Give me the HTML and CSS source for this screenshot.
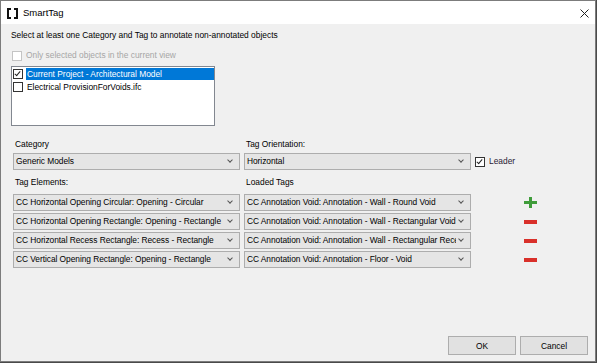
FILE: index.html
```html
<!DOCTYPE html>
<html lang="en">
<head>
  <meta charset="UTF-8" />
  <title>SmartTag</title>
  <link rel="stylesheet" href="styles.css">
</head>
<body>

<div class="window">
  <div class="titlebar">
    <svg class="app-icon" width="11" height="11" viewBox="0 0 11 11">
      <path d="M0 0h4v2H2v7h2v2H0z" fill="#111"/>
      <path d="M11 0H7v2h2v7H7v2h4z" fill="#111"/>
    </svg>
    <span class="title">SmartTag</span>
    <svg class="close" width="9" height="9" viewBox="0 0 9 9">
      <path d="M0.5 0.5L8.5 8.5M8.5 0.5L0.5 8.5" stroke="#222" stroke-width="1"/>
    </svg>
  </div>

  <div class="content">
    <p class="intro">Select at least one Category and Tag to annotate non-annotated objects</p>

    <label class="check disabled">
      <span class="box"></span>
      Only selected objects in the current view
    </label>

    <div class="listbox">
      <div class="list-item selected">
        <span class="box checked"></span>
        <span class="item-text">Current Project - Architectural Model</span>
      </div>
      <div class="list-item">
        <span class="box"></span>
        <span class="item-text">Electrical ProvisionForVoids.ifc</span>
      </div>
    </div>

    <div class="form">
      <div class="label first">Category</div>
      <div class="label first">Tag Orientation:</div>
      <div></div>
      <div></div>

      <div class="combo"><span>Generic Models</span></div>
      <div class="combo"><span>Horizontal</span></div>
      <label class="check leader"><span class="box checked"></span>Leader</label>
      <div></div>

      <div class="label">Tag Elements:</div>
      <div class="label">Loaded Tags</div>
      <div></div>
      <div></div>

      <div class="combo"><span>CC Horizontal Opening Circular: Opening - Circular</span></div>
      <div class="combo"><span>CC Annotation Void: Annotation - Wall - Round Void</span></div>
      <div></div>
      <div class="icon plus"></div>

      <div class="combo"><span>CC Horizontal Opening Rectangle: Opening - Rectangle</span></div>
      <div class="combo"><span>CC Annotation Void: Annotation - Wall - Rectangular Void</span></div>
      <div></div>
      <div class="icon minus"></div>

      <div class="combo"><span>CC Horizontal Recess Rectangle: Recess - Rectangle</span></div>
      <div class="combo"><span>CC Annotation Void: Annotation - Wall - Rectangular Recess</span></div>
      <div></div>
      <div class="icon minus"></div>

      <div class="combo"><span>CC Vertical Opening Rectangle: Opening - Rectangle</span></div>
      <div class="combo"><span>CC Annotation Void: Annotation - Floor - Void</span></div>
      <div></div>
      <div class="icon minus"></div>
    </div>

    <div class="buttons">
      <button>OK</button>
      <button>Cancel</button>
    </div>
  </div>
</div>

</body>
</html>
```

FILE: styles.css
```css
body {
  margin: 0;
  background: #4a4a4a;
  font-family: "Liberation Sans", Arial, sans-serif;
  font-size: 8.4px;
  line-height: 11px;
  color: #000;
}

.window {
  width: 594px;
  height: 360px;
  border: 1px solid #7c7c7c;
  background: #f0f0f0;
  display: flex;
  flex-direction: column;
}

.titlebar {
  height: 23px;
  background: #fff;
  display: flex;
  align-items: center;
  padding-left: 6px;
  padding-right: 6px;
}

.app-icon {
  margin-right: 5px;
  margin-top: 1px;
}

.title {
  font-size: 9.5px;
  flex: 1;
}

.close {
  margin-top: 1px;
}

.content {
  flex: 1;
  display: flex;
  flex-direction: column;
  padding: 6px 0 0 10px;
}

.intro {
  margin: 0;
}

/* checkboxes */
.check {
  display: flex;
  align-items: center;
  gap: 4px;
}

.box {
  width: 8px;
  height: 8px;
  border: 1px solid #333;
  background: #fff;
  position: relative;
  flex-shrink: 0;
}

.box.checked::after {
  content: "";
  position: absolute;
  left: 2px;
  top: 0px;
  width: 2px;
  height: 5px;
  border: solid #222;
  border-width: 0 1px 1px 0;
  transform: rotate(40deg);
}

.check.disabled {
  color: #a6a6a6;
  margin-top: 9px;
  margin-left: 1px;
}

.check.disabled .box {
  border-color: #c4c4c4;
}

/* list of models */
.listbox {
  width: 202px;
  height: 58px;
  margin-top: 5px;
  border: 1px solid #828790;
  background: #fff;
}

.list-item {
  display: flex;
  align-items: center;
  height: 12px;
  padding-left: 1px;
  margin-top: 1px;
}

.list-item .box {
  margin-right: 3px;
}

.item-text {
  flex: 1;
  padding-left: 1px;
  height: 12px;
  line-height: 12px;
}

.list-item.selected .item-text {
  background: #0078d7;
  color: #fff;
}

/* category / tag form */
.form {
  display: grid;
  grid-template-columns: 227px 227px 45px 13px;
  grid-template-rows: 12px 17px 20px 17px 17px 17px 17px;
  column-gap: 4px;
  row-gap: 2px;
  margin-top: 13px;
  margin-left: 2px;
}

.label {
  padding-left: 2px;
}

.form .label:not(.first) {
  padding-top: 5px;
}

.combo {
  border: 1px solid #adadad;
  background: #e5e5e5;
  display: flex;
  align-items: center;
  padding-left: 2px;
  overflow: hidden;
  position: relative;
}

.combo span {
  white-space: nowrap;
  overflow: hidden;
  flex: 1;
  margin-right: 14px;
  line-height: 13px;
  letter-spacing: -0.05px;
}

.combo::after {
  content: "";
  position: absolute;
  right: 7px;
  top: 4px;
  width: 3px;
  height: 3px;
  border: solid #555;
  border-width: 0 1px 1px 0;
  transform: rotate(45deg);
}

.check.leader {
  gap: 4px;
  color: #2a1a35;
}

/* add / remove icons */
.icon {
  align-self: center;
  position: relative;
  height: 11px;
}

.icon.minus::before {
  content: "";
  position: absolute;
  left: 0;
  top: 4px;
  width: 13px;
  height: 4px;
  background: #d9302a;
}

.icon.plus::before,
.icon.plus::after {
  content: "";
  position: absolute;
  background: #3f9c3a;
}

.icon.plus::before {
  left: 0;
  top: 4px;
  width: 13px;
  height: 3px;
}

.icon.plus::after {
  left: 5px;
  top: 0;
  width: 3px;
  height: 11px;
}

/* dialog buttons */
.buttons {
  margin-top: auto;
  margin-bottom: 6px;
  margin-right: 7px;
  display: flex;
  justify-content: flex-end;
  gap: 4px;
}

button {
  width: 68px;
  height: 19px;
  font-family: "Liberation Sans", Arial, sans-serif;
  font-size: 8.4px;
  border: 1px solid #adadad;
  background: #e1e1e1;
  color: #000;
  padding: 0;
}
```
